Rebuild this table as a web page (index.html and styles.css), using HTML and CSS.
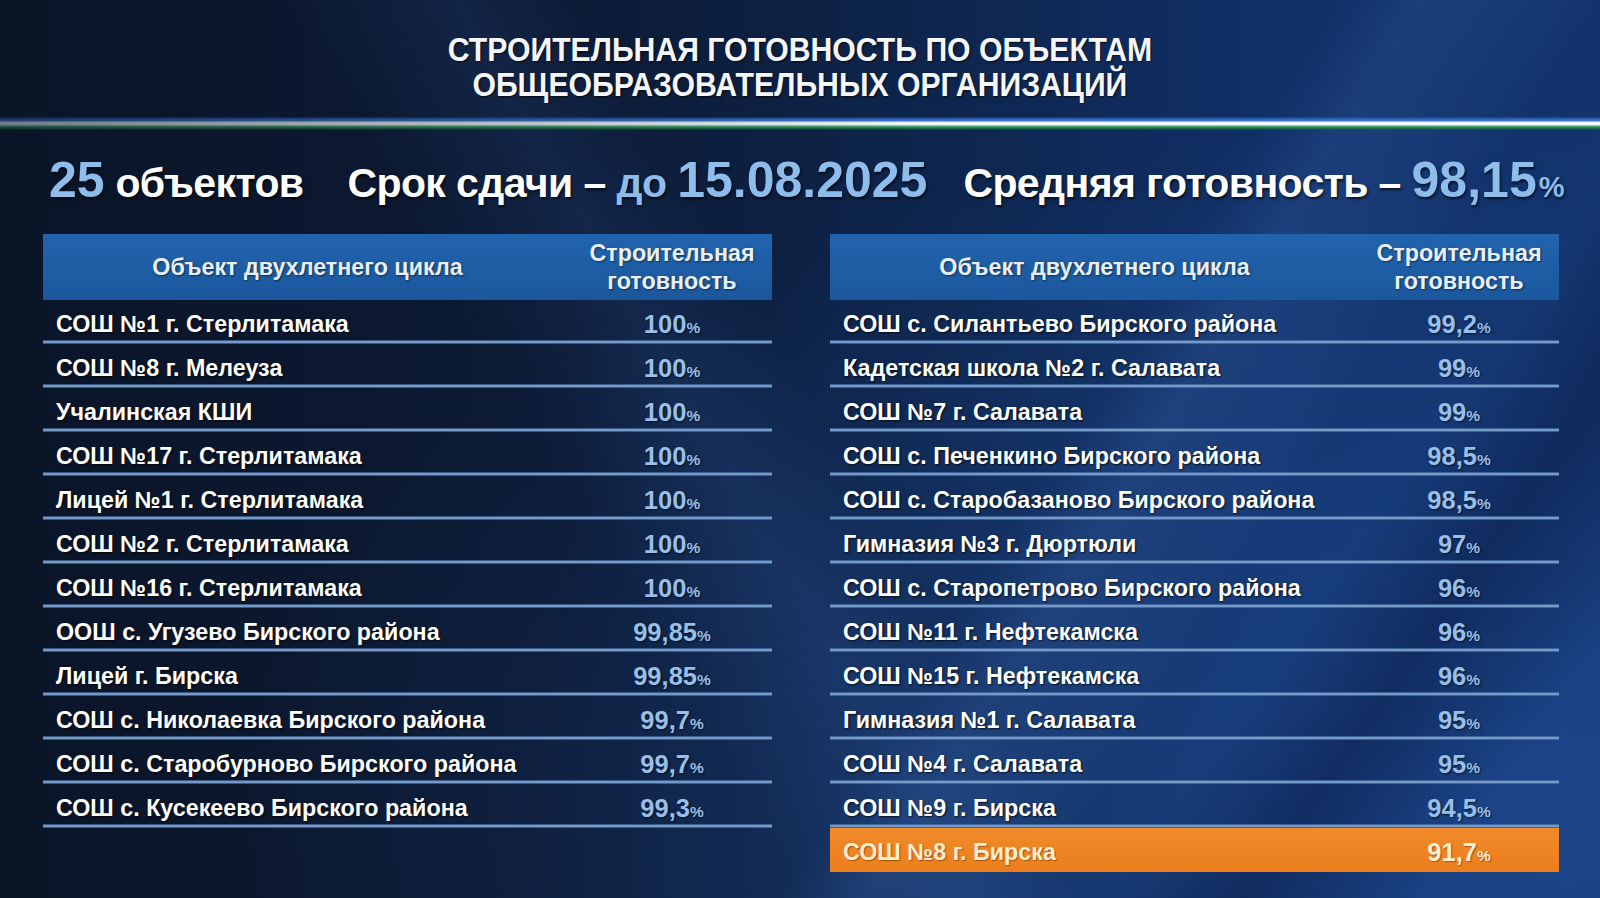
FILE: index.html
```html
<!DOCTYPE html>
<html lang="ru">
<head>
<meta charset="utf-8">
<title>Строительная готовность</title>
<link rel="stylesheet" href="styles.css">
</head>
<body>
<div class="slide">
  <header class="title">
    <div><span class="tl">СТРОИТЕЛЬНАЯ ГОТОВНОСТЬ ПО ОБЪЕКТАМ</span></div>
    <div><span class="tl">ОБЩЕОБРАЗОВАТЕЛЬНЫХ ОРГАНИЗАЦИЙ</span></div>
  </header>
  <div class="flag"></div>
  <div class="stats">
    <div class="stat s1"><span class="num">25</span> объектов</div>
    <div class="stat s2">Срок сдачи – <span class="hl">до</span> <span class="num">15.08.2025</span></div>
    <div class="stat s3">Средняя готовность – <span class="num">98,15</span><span class="pct">%</span></div>
  </div>
  <div class="tables">
    <div class="tbl">
      <div class="thead"><div class="c1">Объект двухлетнего цикла</div><div class="c2">Строительная<br>готовность</div></div>
      <div class="row"><div class="c1">СОШ №1 г. Стерлитамака</div><div class="c2">100<small>%</small></div></div>
      <div class="row"><div class="c1">СОШ №8 г. Мелеуза</div><div class="c2">100<small>%</small></div></div>
      <div class="row"><div class="c1">Учалинская КШИ</div><div class="c2">100<small>%</small></div></div>
      <div class="row"><div class="c1">СОШ №17 г. Стерлитамака</div><div class="c2">100<small>%</small></div></div>
      <div class="row"><div class="c1">Лицей №1 г. Стерлитамака</div><div class="c2">100<small>%</small></div></div>
      <div class="row"><div class="c1">СОШ №2 г. Стерлитамака</div><div class="c2">100<small>%</small></div></div>
      <div class="row"><div class="c1">СОШ №16 г. Стерлитамака</div><div class="c2">100<small>%</small></div></div>
      <div class="row"><div class="c1">ООШ с. Угузево Бирского района</div><div class="c2">99,85<small>%</small></div></div>
      <div class="row"><div class="c1">Лицей г. Бирска</div><div class="c2">99,85<small>%</small></div></div>
      <div class="row"><div class="c1">СОШ с. Николаевка Бирского района</div><div class="c2">99,7<small>%</small></div></div>
      <div class="row"><div class="c1">СОШ с. Старобурново Бирского района</div><div class="c2">99,7<small>%</small></div></div>
      <div class="row"><div class="c1">СОШ с. Кусекеево Бирского района</div><div class="c2">99,3<small>%</small></div></div>
    </div>
    <div class="tbl">
      <div class="thead"><div class="c1">Объект двухлетнего цикла</div><div class="c2">Строительная<br>готовность</div></div>
      <div class="row"><div class="c1">СОШ с. Силантьево Бирского района</div><div class="c2">99,2<small>%</small></div></div>
      <div class="row"><div class="c1">Кадетская школа №2 г. Салавата</div><div class="c2">99<small>%</small></div></div>
      <div class="row"><div class="c1">СОШ №7 г. Салавата</div><div class="c2">99<small>%</small></div></div>
      <div class="row"><div class="c1">СОШ с. Печенкино Бирского района</div><div class="c2">98,5<small>%</small></div></div>
      <div class="row"><div class="c1">СОШ с. Старобазаново Бирского района</div><div class="c2">98,5<small>%</small></div></div>
      <div class="row"><div class="c1">Гимназия №3 г. Дюртюли</div><div class="c2">97<small>%</small></div></div>
      <div class="row"><div class="c1">СОШ с. Старопетрово Бирского района</div><div class="c2">96<small>%</small></div></div>
      <div class="row"><div class="c1">СОШ №11 г. Нефтекамска</div><div class="c2">96<small>%</small></div></div>
      <div class="row"><div class="c1">СОШ №15 г. Нефтекамска</div><div class="c2">96<small>%</small></div></div>
      <div class="row"><div class="c1">Гимназия №1 г. Салавата</div><div class="c2">95<small>%</small></div></div>
      <div class="row"><div class="c1">СОШ №4 г. Салавата</div><div class="c2">95<small>%</small></div></div>
      <div class="row"><div class="c1">СОШ №9 г. Бирска</div><div class="c2">94,5<small>%</small></div></div>
      <div class="row hot"><div class="c1">СОШ №8 г. Бирска</div><div class="c2">91,7<small>%</small></div></div>
    </div>
  </div>
</div>
</body>
</html>
```

FILE: styles.css
```css
html, body {
  margin: 0;
  padding: 0;
}
body {
  width: 1600px;
  height: 898px;
  overflow: hidden;
  font-family: "Liberation Sans", Arial, sans-serif;
  color: #fff;
}
.slide {
  width: 1600px;
  height: 898px;
  box-sizing: border-box;
  background:
    linear-gradient(122deg, transparent 0 62%, rgba(80,130,210,0.16) 66%, rgba(80,130,210,0.06) 72%, transparent 74%),
    linear-gradient(60deg, transparent 0 38%, rgba(60,110,190,0.14) 46%, transparent 52%),
    linear-gradient(125deg, transparent 0 78%, rgba(0,10,40,0.35) 84%, transparent 92%),
    radial-gradient(ellipse at 95% 90%, rgba(40,90,170,0.45), transparent 60%),
    linear-gradient(to right, #0b1528 0%, #0c1a34 35%, #0e264f 60%, #113068 80%, #12336c 100%);
}
.title {
  padding-top: 32px;
  text-align: center;
  font-weight: bold;
  font-size: 33px;
  line-height: 35px;
  color: #f4f6fa;
  text-shadow: 1px 1px 2px rgba(0,0,0,0.7);
}
.title .tl {
  display: inline-block;
  transform: scaleX(0.915);
  white-space: nowrap;
}
.flag {
  margin-top: 15px;
  height: 13px;
  background:
    linear-gradient(to right, rgba(10,20,40,0.55) 0%, rgba(10,20,40,0.3) 25%, rgba(10,20,40,0) 60%),
    linear-gradient(to bottom,
      rgba(40,90,180,0.2) 0px, #2a63b8 2px, #3c7ad0 4px,
      #dfe9ee 5px, #ffffff 6px, #e8f2ee 8px,
      #4fb07c 9px, #1d7a45 11px, rgba(20,80,50,0.3) 13px);
}
.stats {
  margin-top: 20px;
  height: 60px;
  display: flex;
  align-items: baseline;
  padding-left: 49px;
  font-weight: bold;
  font-size: 41px;
  letter-spacing: -0.6px;
  line-height: 60px;
  color: #ffffff;
  text-shadow: 1px 2px 3px rgba(0,0,0,0.7);
  white-space: nowrap;
}
.stat .num, .stat .hl, .stat .pct {
  color: #8ebdec;
}
.stat .num {
  font-size: 50px;
  letter-spacing: 0;
}
.stat .pct {
  font-size: 29px;
  letter-spacing: 0;
  margin-left: 2px;
}
.s2 { margin-left: 44px; }
.s3 { margin-left: 36px; }
.tables {
  margin-top: 24px;
  padding-left: 43px;
  display: grid;
  grid-template-columns: 729px 729px;
  column-gap: 58px;
  align-items: start;
}
.thead {
  display: grid;
  grid-template-columns: 529px 200px;
  height: 66px;
  background: linear-gradient(to bottom, #2164ad, #1b579d);
  color: #e9eff7;
  font-weight: bold;
  font-size: 23.3px;
  line-height: 28px;
  text-shadow: 1px 1px 2px rgba(0,0,0,0.5);
}
.thead > div {
  display: flex;
  align-items: center;
  justify-content: center;
  text-align: center;
}
.row {
  display: grid;
  grid-template-columns: 529px 200px;
  height: 44px;
  box-sizing: border-box;
  padding-top: 4px;
  align-items: center;
  background:
    linear-gradient(to bottom, rgba(70,110,170,0.25) 0, #5d84b8 1px, #8fb0d8 2px, #5d84b8 3px, rgba(70,110,170,0.25) 4px) no-repeat left bottom / 100% 4px;
}
.row .c1 {
  padding-left: 13px;
  font-weight: bold;
  font-size: 23.3px;
  color: #ffffff;
  text-shadow: 1px 1px 2px rgba(0,0,0,0.75);
  white-space: nowrap;
}
.row .c2 {
  text-align: center;
  font-weight: bold;
  font-size: 25.5px;
  color: #98bfe8;
  text-shadow: 1px 1px 2px rgba(0,0,0,0.6);
}
.row .c2 small {
  font-size: 15.5px;
}
.row.hot {
  background: linear-gradient(to bottom, #f08a2a, #ec7e1c);
}
.row.hot .c1, .row.hot .c2 {
  color: #fdeed2;
  text-shadow: 1px 1px 1px rgba(120,50,0,0.6);
}
```
